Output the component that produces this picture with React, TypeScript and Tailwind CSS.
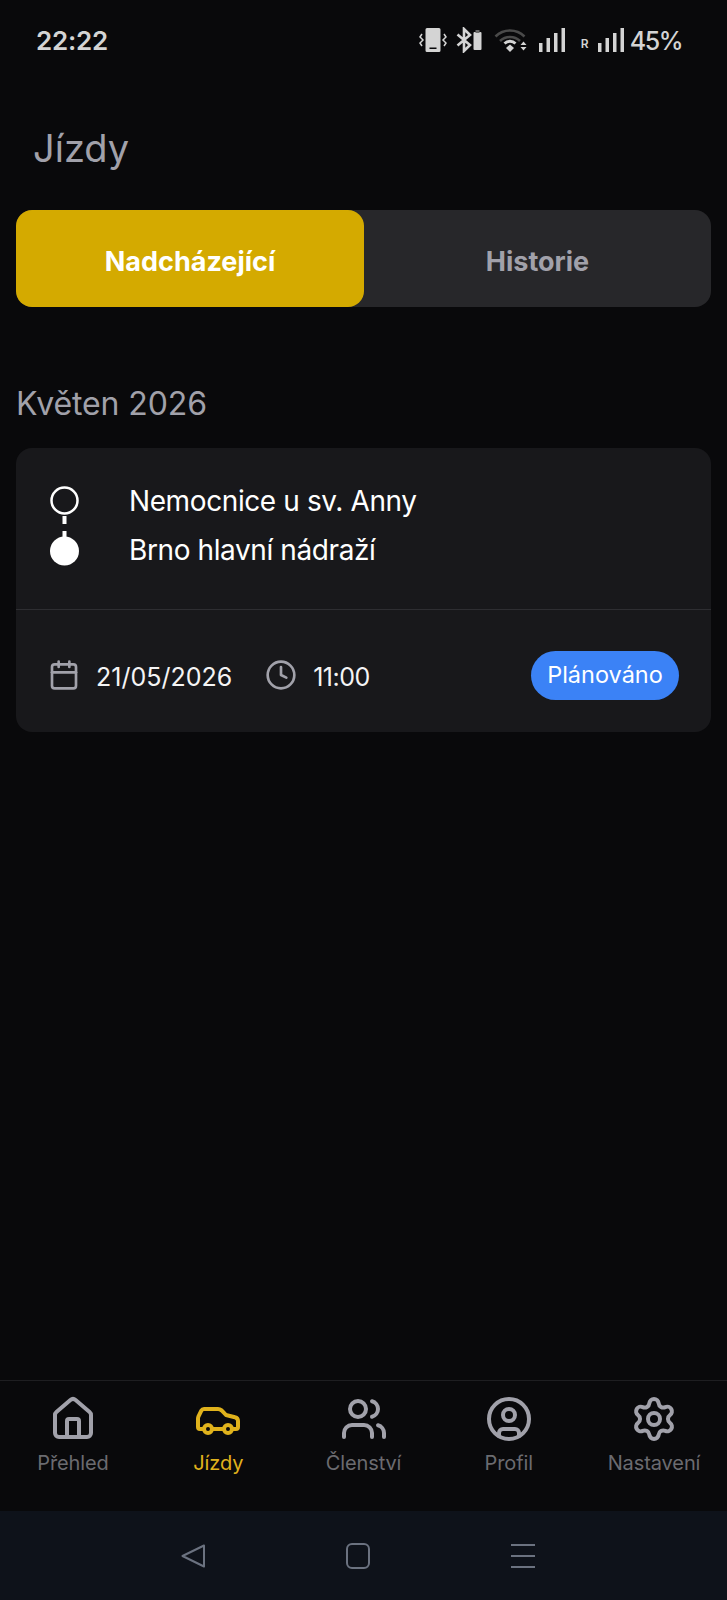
import type { ReactNode } from "react";
import { Calendar, Clock, House, Car, Users, CircleUser, Settings } from "lucide-react";

const font = { fontFamily: "Inter, 'Noto Sans', sans-serif" };

function PhoneVibrate() {
  return (
    <svg width="28" height="26" viewBox="0 0 28 26">
      <path d="M8 1h12a1.500 1.500 0 0 1 1.500 1.500v21a1.500 1.500 0 0 1-1.500 1.500H8a1.500 1.500 0 0 1-1.500-1.500v-21A1.500 1.500 0 0 1 8 1Z" fill="#d4d4d4" />
      <rect x="10.500" y="20.500" width="7" height="1.500" fill="#09090b" />
      <path d="M3 7 1 10l3 3-3 3 2 3" stroke="#d4d4d4" strokeWidth="1.500" fill="none" />
      <path d="M25 7l2 3-3 3 3 3-2 3" stroke="#d4d4d4" strokeWidth="1.500" fill="none" />
    </svg>
  );
}

function BluetoothBattery() {
  return (
    <svg width="26" height="26" viewBox="0 0 26 26">
      <path d="M1.500 7.500 14 18l-6 6V2l6 6L1.500 18.500" stroke="#d4d4d4" strokeWidth="2.600" fill="none" />
      <rect x="17.500" y="5" width="8" height="18" rx="1" fill="#d4d4d4" />
      <rect x="19.500" y="3" width="4" height="3" fill="#6b6b6b" />
    </svg>
  );
}

function Wifi() {
  return (
    <svg width="34" height="26" viewBox="0 0 34 26">
      <path d="M1.500 9.500C9.500 1.500 22.500 1.500 30.500 9.500" stroke="#4a4a4a" strokeWidth="2.500" fill="none" />
      <path d="M6 14C11.500 8.500 20.500 8.500 26 14" stroke="#4a4a4a" strokeWidth="2.500" fill="none" />
      <path d="M10.500 16.500c3-3 8-3 11 0" stroke="#d4d4d4" strokeWidth="2.800" fill="none" />
      <path d="M12 21l4-3.500 4 3.500-4 4Z" fill="#d4d4d4" />
      <path d="M26.500 18l3-3.500 3 3.500ZM26.500 20h6l-3 3.500Z" fill="#d4d4d4" />
    </svg>
  );
}

function Signal() {
  return (
    <svg width="26" height="26" viewBox="0 0 26 26" fill="#d4d4d4">
      <rect x="0" y="16" width="3.500" height="9" />
      <rect x="7.500" y="11" width="3.500" height="14" />
      <rect x="15" y="6" width="3.500" height="19" />
      <rect x="22.500" y="1" width="3.500" height="24" />
    </svg>
  );
}

function RouteMarker() {
  return (
    <svg width="29" height="80" viewBox="0 0 29 80">
      <circle cx="14.500" cy="14.500" r="13" fill="none" stroke="#fff" strokeWidth="2.500" />
      <rect x="12.500" y="30" width="4" height="8" fill="#fff" />
      <rect x="12.500" y="45" width="4" height="8" fill="#fff" />
      <circle cx="14.500" cy="65" r="14.500" fill="#fff" />
    </svg>
  );
}

function NavItem({ label, icon, active }: { label: string; icon: ReactNode; active?: boolean }) {
  return (
    <div className="flex flex-col items-center w-[118px]">
      <div className="h-[48px] flex items-center justify-center">{icon}</div>
      <span className={`mt-[6px] text-[20px] leading-[28px] tracking-[-0.1px] whitespace-nowrap ${active ? "text-[#e0b21c]" : "text-[#6b6b70]"}`}>{label}</span>
    </div>
  );
}

export default function App() {
  return (
    <div style={font} className="w-[727px] h-[1600px] flex flex-col bg-[#09090b] overflow-hidden">
      <div className="h-[80px] flex items-center justify-between pl-[36px] pr-[45px] text-[#d4d4d4]">
        <span className="text-[26px] font-semibold tracking-[-0.2px]">22:22</span>
        <div className="flex items-center">
          <PhoneVibrate />
          <div className="ml-[9px]"><BluetoothBattery /></div>
          <div className="ml-[12px]"><Wifi /></div>
          <div className="ml-[11px]"><Signal /></div>
          <span className="ml-[16px] text-[12px] font-semibold w-[9px] mt-[8px]">R</span>
          <div className="ml-[8px]"><Signal /></div>
          <span className="ml-[6px] mt-[3px] text-[25px] font-medium tracking-[-1.5px]">45%</span>
        </div>
      </div>

      <h1 className="mt-[40px] pl-[33px] text-[38px] leading-[56px] text-[#a1a1aa] font-normal">Jízdy</h1>

      <div className="mx-[16px] mt-[34px] h-[97px] flex rounded-2xl bg-[#27272a]">
        <div className="w-[348px] rounded-2xl bg-[#d4aa00] flex items-center justify-center pt-[7px] text-white text-[27px] font-bold">Nadcházející</div>
        <div className="flex-1 flex items-center justify-center pt-[7px] text-[#a1a1aa] text-[27px] font-bold">Historie</div>
      </div>

      <h2 className="mt-[77px] pl-[16px] text-[32px] leading-[40px] tracking-[-0.1px] text-[#a1a1aa] font-normal">Květen 2026</h2>

      <div className="mx-[16px] mt-[24px] h-[284px] rounded-2xl bg-[#18181b] flex flex-col">
        <div className="h-[162px] border-b border-[#2e2e32] flex pl-[34px] pt-[38px]">
          <RouteMarker />
          <div className="ml-[50px] -mt-[9px] text-white text-[28px] leading-[49px] tracking-[-0.4px]">
            <div>Nemocnice u sv. Anny</div>
            <div>Brno hlavní nádraží</div>
          </div>
        </div>
        <div className="flex-1 flex items-center pl-[32px] pr-[32px] pt-[14px]">
          <div className="mb-[6px]"><Calendar size={32} color="#a1a1aa" strokeWidth={2} /></div>
          <span className="ml-[16px] text-[25px] text-[#f4f4f5]">21/05/2026</span>
          <div className="ml-[33px] mb-[6px]"><Clock size={32} color="#a1a1aa" strokeWidth={2} /></div>
          <span className="ml-[16px] text-[25px] tracking-[-0.5px] text-[#f4f4f5]">11:00</span>
          <div className="ml-auto mb-[6px] h-[49px] w-[148px] rounded-full bg-[#3b82f6] flex items-center justify-center text-white text-[23.500px]">Plánováno</div>
        </div>
      </div>

      <div className="flex-1" />

      <div className="h-[131px] border-t border-[#1e1e21] flex justify-between items-start pt-[14px] px-[14px]">
        <NavItem label="Přehled" icon={<House size={48} color="#a1a1aa" strokeWidth={2} />} />
        <NavItem label="Jízdy" active icon={<Car size={48} color="#e0b21c" strokeWidth={2} />} />
        <NavItem label="Členství" icon={<Users size={48} color="#a1a1aa" strokeWidth={2} />} />
        <NavItem label="Profil" icon={<CircleUser size={48} color="#a1a1aa" strokeWidth={2} />} />
        <NavItem label="Nastavení" icon={<Settings size={48} color="#a1a1aa" strokeWidth={2} />} />
      </div>

      <div className="h-[89px] bg-[#0e121a] flex items-center justify-center gap-[141px] pr-[11px]">
        <svg width="24" height="24" viewBox="0 0 24 24" fill="none" stroke="#6b7280" strokeWidth="2">
          <path d="M23 1.500 1.500 12 23 22.500Z" strokeLinejoin="round" />
        </svg>
        <svg width="24" height="26" viewBox="0 0 24 26" fill="none" stroke="#6b7280" strokeWidth="2">
          <rect x="1" y="1" width="22" height="24" rx="5" />
        </svg>
        <svg width="24" height="24" viewBox="0 0 24 24" fill="none" stroke="#6b7280" strokeWidth="2">
          <path d="M0 1h24M0 12h24M0 23h24" />
        </svg>
      </div>
    </div>
  );
}
